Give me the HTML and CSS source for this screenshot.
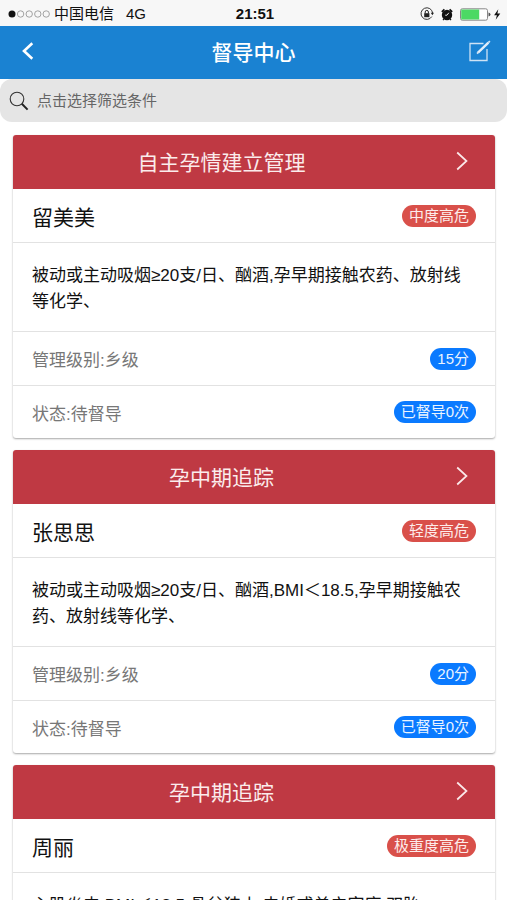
FILE: index.html
```html
<!DOCTYPE html>
<html lang="zh-CN">
<head>
<meta charset="utf-8">
<meta name="viewport" content="width=device-width, initial-scale=1">
<title>督导中心</title>
<link rel="stylesheet" href="styles.css">
</head>
<body>
<div class="app">
  <div class="status">
    <div class="carrier">
      <svg class="signal" width="42" height="10" viewBox="0 0 42 10" aria-hidden="true"><circle cx="4" cy="5" r="3.5" fill="#111"/><g fill="none" stroke="#999" stroke-width="0.9"><circle cx="12.6" cy="5" r="3.2"/><circle cx="21.2" cy="5" r="3.2"/><circle cx="29.8" cy="5" r="3.2"/><circle cx="38.2" cy="5" r="3.2"/></g></svg>
      <span>中国电信</span>
      <span class="network">4G</span>
    </div>
    <time class="clock">21:51</time>
    <div class="indicators">
      <svg width="14" height="14" viewBox="0 0 14 14" aria-hidden="true"><path d="M11.8 9.6A5.8 5.8 0 1 1 12.6 6" fill="none" stroke="#333" stroke-width="1"/><path d="M10.8 5.8h3.2l-1.6 2.4z" fill="#222"/><rect x="4.2" y="6.2" width="5.2" height="4" fill="#222"/><path d="M5.2 6.4V5a1.6 1.6 0 0 1 3.2 0v1.4" fill="none" stroke="#222"/></svg>
      <svg width="12" height="13" viewBox="0 0 12 13" aria-hidden="true"><circle cx="6" cy="7" r="5.2" fill="#111"/><path d="M.8 3.8 3.4 1.4M11.2 3.8 8.6 1.4" stroke="#111" stroke-width="1.7"/><path d="M2.8 11 2 12.2M9.2 11l.8 1.2" stroke="#111" stroke-width="1.2"/><path d="M7.8 4.8 6 7.2H4.2" fill="none" stroke="#f7f7f7" stroke-width=".9"/></svg>
      <svg class="battery" width="42" height="13" viewBox="0 0 42 13" aria-hidden="true"><rect x=".5" y=".8" width="27" height="11.4" rx="1.8" fill="#fff" stroke="#888"/><rect x="1.2" y="1.5" width="18" height="10" fill="#4cd964"/><path d="M28.5 4.5q2 .5 2 2t-2 2z" fill="#555"/><path d="M38.3 1.2 34.1 7.2h2.8l-1.2 4.6 4.6-6.2h-2.9z" fill="#111"/></svg>
    </div>
  </div>
  <header class="navbar">
    <button class="nav-btn back" aria-label="返回"><svg width="12" height="18" viewBox="0 0 12 18" aria-hidden="true"><path d="M10.3 1.3 2 9l8.3 7.7" fill="none" stroke="#fff" stroke-width="2.6"/></svg></button>
    <h1>督导中心</h1>
    <button class="nav-btn edit" aria-label="编辑"><svg width="22" height="22" viewBox="0 0 22 22" aria-hidden="true"><path d="M14.5 3.5H1v17h17V9" fill="none" stroke="#cfe3f5" stroke-width="1.3"/><path d="m9 12.6 10.4-10" stroke="#e2eefa" stroke-width="2.4"/><path d="m19.3 2.7 1.6-1.6M8 13.6l1.4-1.4" stroke="#cfe3f5" stroke-width="1.7"/></svg></button>
  </header>
  <label class="search">
    <svg width="20" height="20" viewBox="0 0 20 20" aria-hidden="true"><circle cx="8" cy="8" r="6.8" fill="none" stroke="#333" stroke-width="1.1"/><path d="m12.8 12.8 5.8 5.8" stroke="#222" stroke-width="2"/></svg>
    <input type="text" placeholder="点击选择筛选条件" aria-label="筛选条件">
  </label>
  <main class="list">
    <article class="card">
      <a class="card-head" href="#"><h2>自主孕情建立管理</h2><svg class="chevron" width="12" height="20" viewBox="0 0 12 20" aria-hidden="true"><path d="m1.2 1.5 9.3 8.5-9.3 8.5" fill="none" stroke="#fbe9ea" stroke-width="1.7"/></svg></a>
      <div class="row name"><h3>留美美</h3><span class="badge risk">中度高危</span></div>
      <p class="detail">被动或主动吸烟≥20支/日、酗酒,孕早期接触农药、放射线等化学、</p>
      <div class="row"><span>管理级别:乡级</span><span class="badge">15分</span></div>
      <div class="row"><span>状态:待督导</span><span class="badge">已督导0次</span></div>
    </article>
    <article class="card">
      <a class="card-head" href="#"><h2>孕中期追踪</h2><svg class="chevron" width="12" height="20" viewBox="0 0 12 20" aria-hidden="true"><path d="m1.2 1.5 9.3 8.5-9.3 8.5" fill="none" stroke="#fbe9ea" stroke-width="1.7"/></svg></a>
      <div class="row name"><h3>张思思</h3><span class="badge risk">轻度高危</span></div>
      <p class="detail">被动或主动吸烟≥20支/日、酗酒,BMI＜18.5,孕早期接触农药、放射线等化学、</p>
      <div class="row"><span>管理级别:乡级</span><span class="badge">20分</span></div>
      <div class="row"><span>状态:待督导</span><span class="badge">已督导0次</span></div>
    </article>
    <article class="card">
      <a class="card-head" href="#"><h2>孕中期追踪</h2><svg class="chevron" width="12" height="20" viewBox="0 0 12 20" aria-hidden="true"><path d="m1.2 1.5 9.3 8.5-9.3 8.5" fill="none" stroke="#fbe9ea" stroke-width="1.7"/></svg></a>
      <div class="row name"><h3>周丽</h3><span class="badge risk">极重度高危</span></div>
      <p class="detail">心肌炎史,BMI＜18.5,骨盆狭小,未婚或单亲家庭,双胎</p>
    </article>
  </main>
</div>
</body>
</html>
```
FILE: styles.css
```css
* { box-sizing: border-box; }

body {
  margin: 0;
  background: #fff;
  color: #111;
  font-family: "Liberation Sans", "Noto Sans CJK SC", sans-serif;
}

h1, h2, h3, p { margin: 0; font-weight: 400; }

button { border: 0; padding: 0; background: none; }

.app {
  display: flex;
  flex-direction: column;
  height: 100vh;
  overflow: hidden;
}

.status {
  display: grid;
  grid-template-columns: 1fr auto 1fr;
  align-items: center;
  flex: none;
  height: 26px;
  padding: 2px 5px 0 8px;
  background: #f7f7f7;
  font-size: 15px;
  line-height: 24px;
}

.carrier { display: flex; align-items: center; gap: 4px; }
.network { margin-left: 8px; }
.clock { font-weight: 700; }
.indicators { display: flex; align-items: center; justify-content: flex-end; gap: 7px; }

.navbar {
  display: grid;
  grid-template-columns: 56px 1fr 56px;
  align-items: center;
  flex: none;
  height: 53px;
  padding-bottom: 3px;
  background: #1a82d2;
  color: #fff;
}

.navbar h1 { font-size: 21px; font-weight: 500; text-align: center; }
.nav-btn { display: flex; align-items: center; height: 100%; }
.back { justify-content: center; }
.edit { justify-content: flex-end; padding-right: 16px; }

.search {
  display: flex;
  align-items: center;
  gap: 8px;
  flex: none;
  height: 43px;
  padding: 0 9px;
  border-radius: 12px;
  background: #e5e5e5;
}

.search input {
  flex: 1;
  min-width: 0;
  border: 0;
  padding: 0;
  outline: 0;
  background: none;
  font: inherit;
  font-size: 15px;
}

.search input::placeholder { color: #666; opacity: 1; }

.list {
  display: flex;
  flex-direction: column;
  gap: 12px;
  flex: 1;
  min-height: 0;
  padding: 13px 12px 0 13px;
  overflow: hidden;
}

.card {
  flex: none;
  border-radius: 3px;
  background: #fff;
  box-shadow: 0 1px 2px rgba(0, 0, 0, 0.35);
  overflow: hidden;
}

.card-head {
  display: flex;
  align-items: center;
  gap: 45px;
  height: 54px;
  padding: 0 27px 2px 19px;
  background: #bf3943;
  color: #fbecec;
  text-decoration: none;
}

.card-head h2 { flex: 1; font-size: 21px; text-align: center; }

.row {
  display: flex;
  align-items: center;
  justify-content: space-between;
  height: 54px;
  padding: 0 19px;
  border-bottom: 1px solid #e2e2e2;
  color: #777;
  font-size: 17px;
}

.row:last-child { height: 52px; border-bottom: 0; }
.name { color: #111; }
.name h3 { font-size: 21px; }

.badge {
  padding: 0 7px;
  border-radius: 11px;
  background: #0a7aff;
  color: #eaf4ff;
  font-size: 15px;
  line-height: 22px;
}

.risk { background: #d9504a; color: #fdeceb; }

.detail {
  padding: 20px 18px 16px 19px;
  border-bottom: 1px solid #e2e2e2;
  font-size: 17px;
  line-height: 26px;
}
```
